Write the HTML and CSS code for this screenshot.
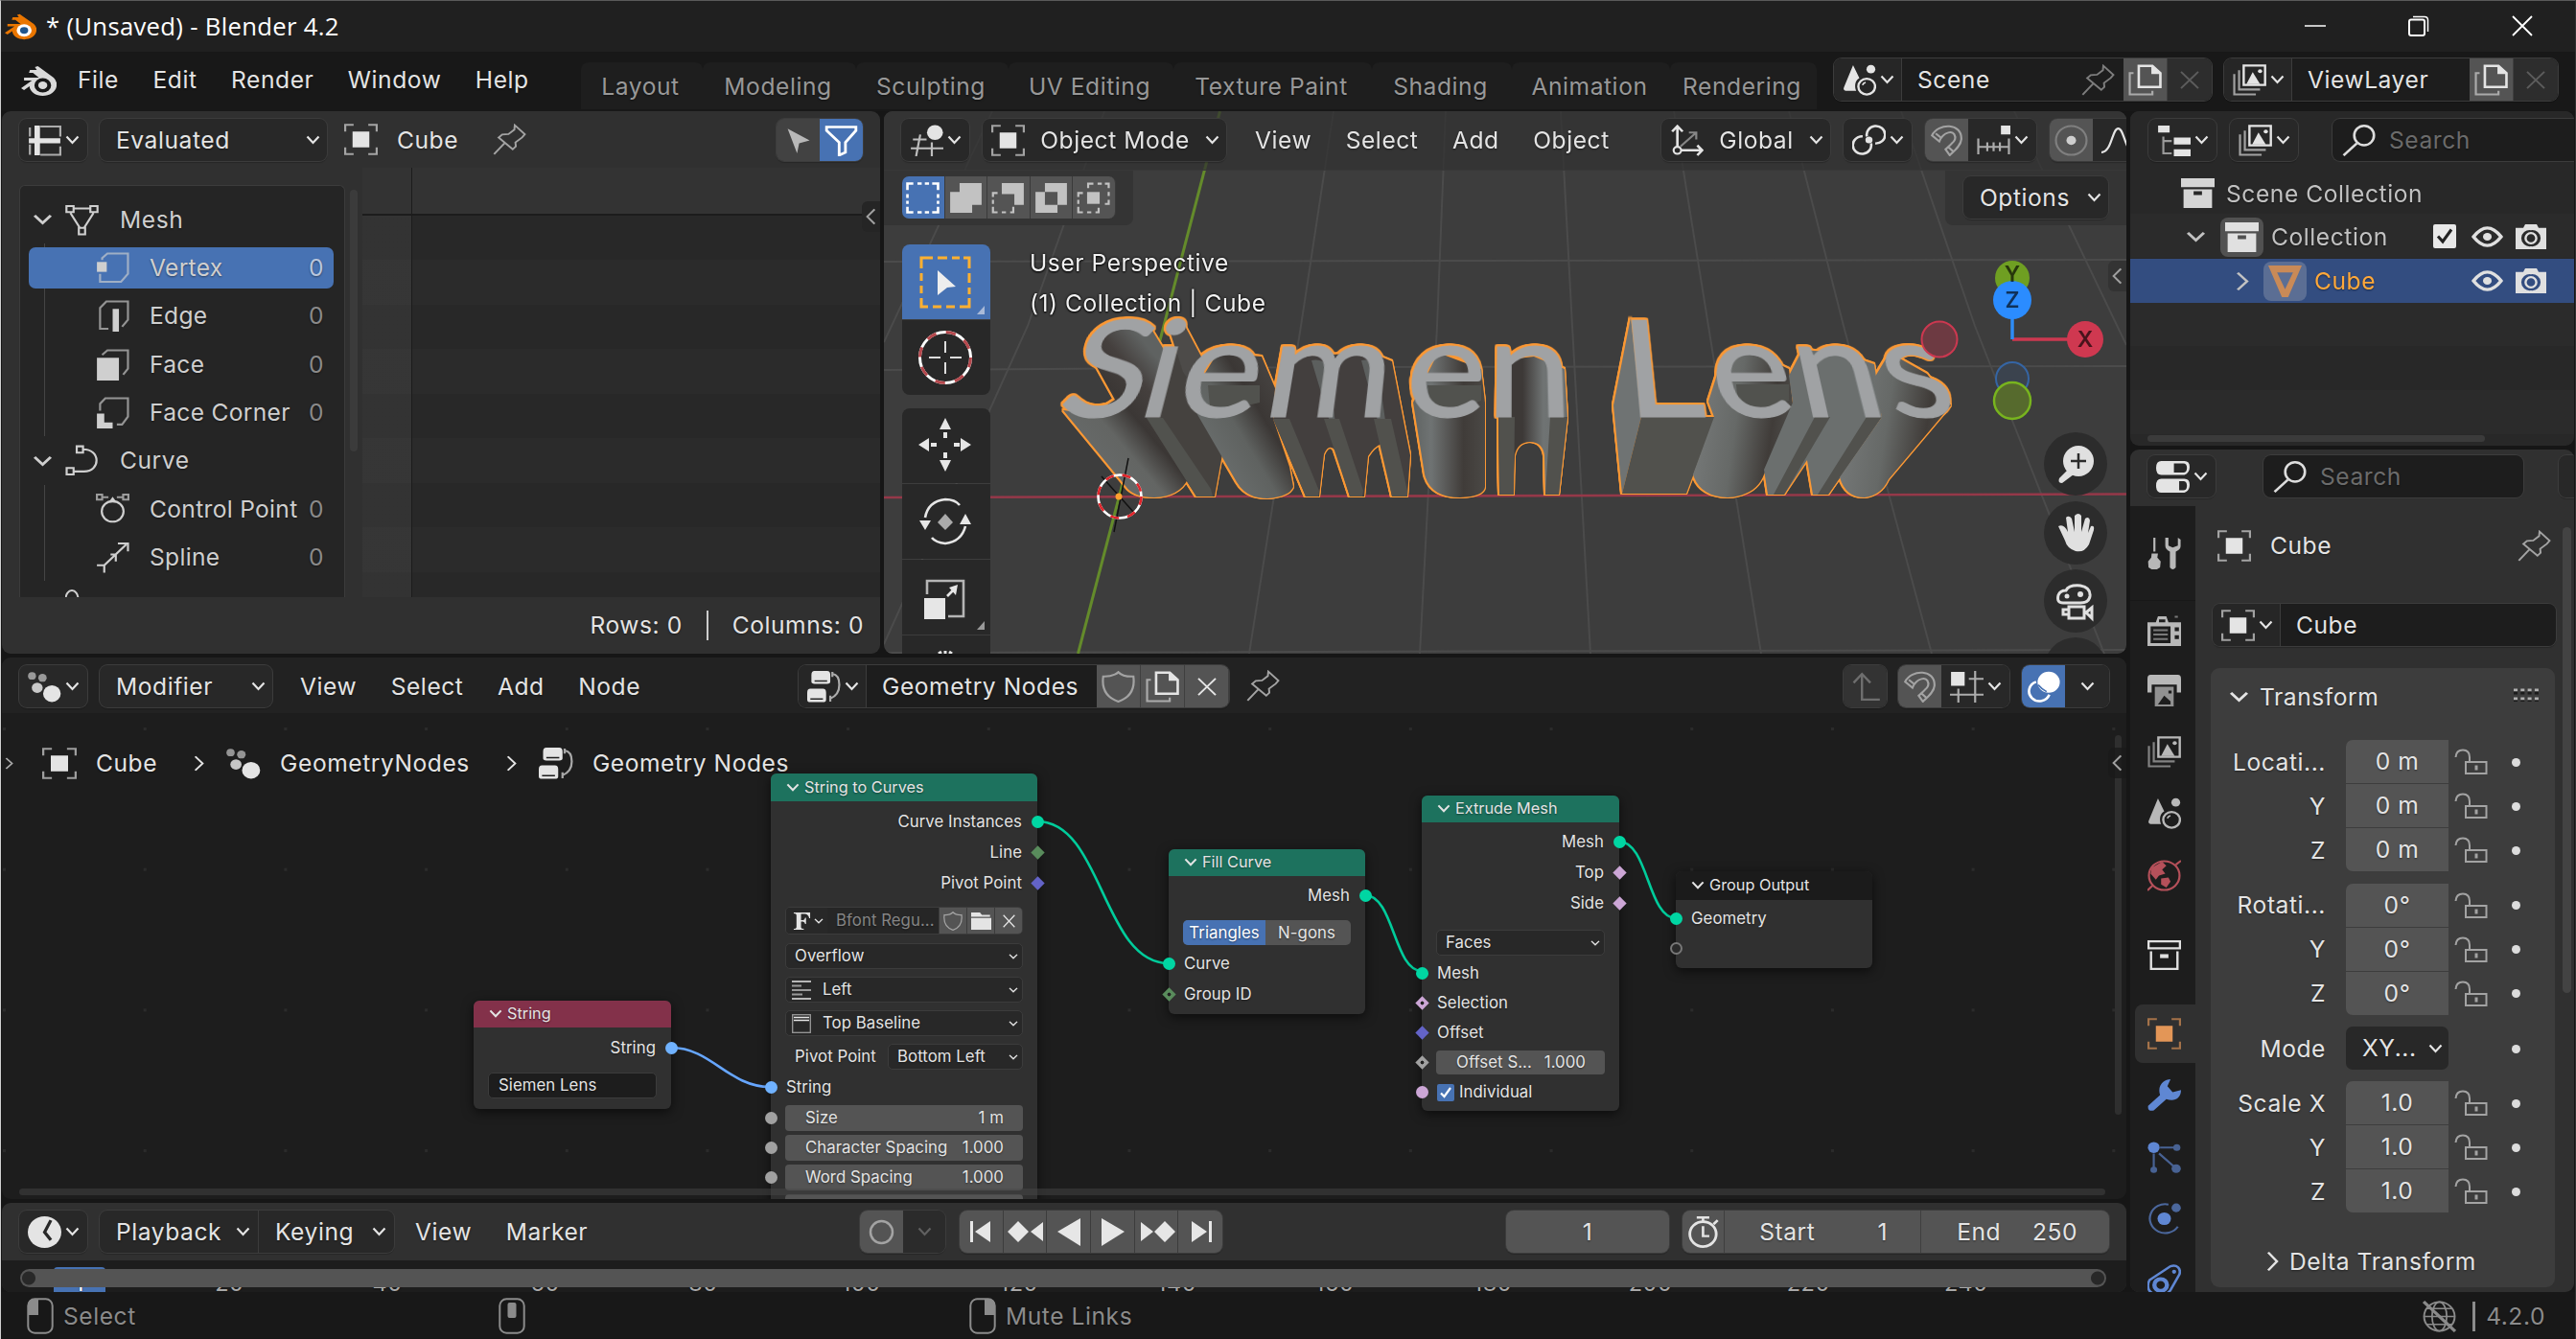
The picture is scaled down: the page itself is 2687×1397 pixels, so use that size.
FILE: index.html
```html
<!DOCTYPE html>
<html lang="en">
<head>
<meta charset="utf-8">
<title>* (Unsaved) - Blender 4.2</title>
<link rel="stylesheet" href="styles.css">
</head>
<body>
<svg class="defs" aria-hidden="true">
  <symbol id="chev" viewBox="0 0 15 10" preserveAspectRatio="none"><path d="M1.5 1.5 7.5 8 13.5 1.5" fill="none" stroke="currentColor" stroke-width="2.2"/></symbol>
  <symbol id="chevr" viewBox="0 0 10 20" preserveAspectRatio="none"><path d="M1.5 1.5 8.5 10 1.5 18.5" fill="none" stroke="currentColor" stroke-width="2"/></symbol>
  <symbol id="chevl" viewBox="0 0 10 20" preserveAspectRatio="none"><path d="M8.5 1.5 1.5 10 8.5 18.5" fill="none" stroke="currentColor" stroke-width="2"/></symbol>
  <symbol id="x" viewBox="0 0 20 20" preserveAspectRatio="none"><path d="M1 1 19 19M19 1 1 19" fill="none" stroke="currentColor" stroke-width="2"/></symbol>
  <symbol id="logo" viewBox="0 0 36 34" preserveAspectRatio="none"><path d="M17 2 33 14Q37 18 36 23C35 29 29 33 22 33S9 29 8.500 23L3 27 0 25 11 17H3V14H18L12 9H8L9 6H16L14 3Z" fill="currentColor"/><ellipse cx="22" cy="22" rx="8.500" ry="7.500" fill="var(--hole)"/><ellipse cx="22" cy="22" rx="4.600" ry="4" fill="var(--eye)"/></symbol>
  <symbol id="sheet" viewBox="0 0 16 16" preserveAspectRatio="none"><path d="M6 1H15.500V6M15.500 11V15.300H6M1 6V1.500M1 10V15.300" fill="none" stroke="currentColor" opacity=".7"/><path d="M4.500.5V15.500M.5 8.200H15.500" stroke="currentColor" stroke-width="2.600"/></symbol>
  <symbol id="obj" viewBox="0 0 16 16" preserveAspectRatio="none"><path d="M4 4H12V12H4Z" fill="currentColor"/><path d="M.5 4V.6H4.500M11.500.6H15.500V4M15.500 12V15.400H11.500M4.500 15.400H.5V12" fill="none" stroke="currentColor" opacity=".65"/></symbol>
  <symbol id="pin" viewBox="0 0 16 16" preserveAspectRatio="none"><path d="M10.500.8 15.300 5.400 14 7 10.800 9.500 11 11.500 9.500 13 2.800 7 4.500 5.500 7.500 5.300 10.300 3ZM5.500 10 .6 15.500" fill="none" stroke="currentColor" stroke-width=".9"/></symbol>
  <symbol id="arrow" viewBox="0 0 16 16" preserveAspectRatio="none"><path d="M3 2 13.500 8 8.500 9.500 7.500 14.500Z" fill="currentColor"/></symbol>
  <symbol id="filter" viewBox="0 0 16 16" preserveAspectRatio="none"><path d="M1 1.200H15V3L10 9V14L7 15.500V9L1 3Z" fill="none" stroke="currentColor" stroke-width="1.300"/></symbol>
  <symbol id="mesh" viewBox="0 0 16 16" preserveAspectRatio="none"><path d="M.6 1H4V4H.6ZM12 1H15.400V4H12ZM6.500 12H9.500V15.300H6.500ZM4 2.200H12M2.500 4.500 7 12M13.500 4.500 9 12" fill="none" stroke="currentColor"/></symbol>
  <symbol id="vert" viewBox="0 0 16 16" preserveAspectRatio="none"><path d="M3 4V3L5.500 .7H15.300V11L12 15H2V11" fill="none" stroke="currentColor" opacity=".65"/><path d="M.5 5H5.200V10H.5Z" fill="currentColor"/></symbol>
  <symbol id="edge" viewBox="0 0 16 16" preserveAspectRatio="none"><path d="M6 14.500H2V4L5 .7H15.300V10L12.500 13.500" fill="none" stroke="currentColor" opacity=".65"/><path d="M8 4.500H11V16H8Z" fill="currentColor"/></symbol>
  <symbol id="face" viewBox="0 0 16 16" preserveAspectRatio="none"><path d="M3 3 5.500 .7H15.300V10L13 13" fill="none" stroke="currentColor" opacity=".65"/><path d="M.5 4.500H11V16H.5Z" fill="currentColor"/></symbol>
  <symbol id="corner" viewBox="0 0 16 16" preserveAspectRatio="none"><path d="M2 7V3.500L4.500 .7H15.300V10L12.500 14H10" fill="none" stroke="currentColor" opacity=".65"/><path d="M.5 8.500H4V13H8V16H.5Z" fill="currentColor"/></symbol>
  <symbol id="curve" viewBox="0 0 16 16" preserveAspectRatio="none"><path d="M5.500 .8H8.500V4H5.500ZM.7 11.800H4V15H.7ZM8.500 2.300C17 2.300 17 13.500 9 13.500H4" fill="none" stroke="currentColor"/></symbol>
  <symbol id="cpoint" viewBox="0 0 16 16" preserveAspectRatio="none"><ellipse cx="8" cy="9.500" rx="5.200" ry="5.200" fill="none" stroke="currentColor"/><path d="M.5 1H3V3.500H.5ZM13 1H15.500V3.500H13ZM3 2.300H6M10 2.300H13" fill="none" stroke="currentColor" opacity=".7"/><path d="M8 2 10 5H6Z" fill="currentColor"/></symbol>
  <symbol id="spline" viewBox="0 0 16 16" preserveAspectRatio="none"><path d="M4 12 14.500 1.500M10.500 1H15.300V5M.5 12H4V15.800M7 6.500H9.500V10" fill="none" stroke="currentColor"/></symbol>
  <symbol id="view3d" viewBox="0 0 16 16" preserveAspectRatio="none"><ellipse cx="12" cy="4" rx="3.800" ry="3.800" fill="currentColor"/><path d="M1.500 7.500H8M.5 12H16M5 5 3 16M10.500 9V16" fill="none" stroke="currentColor" opacity=".8"/></symbol>
  <symbol id="orient" viewBox="0 0 16 16" preserveAspectRatio="none"><path d="M3.500 11V1M1 3.500 3.500.8 6 3.500M5.500 13H15M13 10.500 15.300 13 13 15.500" fill="none" stroke="currentColor" stroke-width="1.200"/><path d="M5 11 12 4.500M9 4H12.500V7.500" fill="none" stroke="currentColor" opacity=".5"/><circle cx="3.500" cy="13" r="1.800" fill="none" stroke="currentColor"/></symbol>
  <symbol id="pivot" viewBox="0 0 16 16" preserveAspectRatio="none"><path d="M7 6A4.400 4.400 0 1 1 11 9.500M9 9.500A4.400 4.400 0 1 1 5 6" fill="none" stroke="currentColor" stroke-width="1.200"/><circle cx="8" cy="7.800" r="1.700" fill="currentColor"/></symbol>
  <symbol id="magnet" viewBox="0 0 16 16" preserveAspectRatio="none"><path d="M1 5.500C4 -1 15.500-1 15 7.500 14.800 10.500 12 13 9.500 15.500L7.500 12.500C11 9 12.500 8 12 6 11.500 2.500 6.500 3.500 4.500 8.500ZM2.800 4.500 5.800 7M8.500 11 11 13.500" fill="none" stroke="currentColor"/></symbol>
  <symbol id="incr" viewBox="0 0 16 16" preserveAspectRatio="none"><path d="M11.500.5H16V5H11.500Z" fill="currentColor"/><path d="M.7 7V15M5 9V13.500M8 9V13.500M11 9V13.500M15.300 7V15M.7 11.300H15.300" fill="none" stroke="currentColor" opacity=".7"/></symbol>
  <symbol id="prop" viewBox="0 0 16 16" preserveAspectRatio="none"><circle cx="8" cy="8" r="7.300" fill="none" stroke="currentColor" opacity=".3"/><circle cx="8" cy="8" r="2.300" fill="currentColor" opacity=".85"/></symbol>
  <symbol id="fall" viewBox="0 0 16 16" preserveAspectRatio="none"><path d="M0 14C5 14 5 2 8 2S11 14 16 14" fill="none" stroke="currentColor"/></symbol>
  <symbol id="s1" viewBox="0 0 16 16" preserveAspectRatio="none"><path d="M.7 4V.7H3.500M5.500.7H7.500M9 .7H11M12.500.7H15.300V4M15.300 6V8M15.300 9.500V11M15.300 12.500V15.300H12.500M11 15.300H9M7.500 15.300H5.500M3.500 15.300H.7V12.500M.7 11V9.500M.7 8V6" fill="none" stroke="currentColor" stroke-width="1.200"/></symbol>
  <symbol id="s2" viewBox="0 0 16 16" preserveAspectRatio="none"><path d="M5 .5H15.500V11.500H11V15.500H.5V5H5Z" fill="currentColor"/></symbol>
  <symbol id="s3" viewBox="0 0 16 16" preserveAspectRatio="none"><path d="M5 .5H15.500V11.500H11V6H5Z" fill="currentColor"/><path d="M3 5.500H.8V7.500M.8 9V11M.8 12.500V15.300H3M5 15.300H7M9 15.300H10.500V12.500" fill="none" stroke="currentColor"/></symbol>
  <symbol id="s4" viewBox="0 0 16 16" preserveAspectRatio="none"><path fill-rule="evenodd" d="M5 .5H15.500V11.500H11V15.500H.5V5H5ZM5 5V11.500H11V5Z" fill="currentColor"/></symbol>
  <symbol id="s5" viewBox="0 0 16 16" preserveAspectRatio="none"><path d="M5 5H11V11H5Z" fill="currentColor"/><path d="M5.500 3V.8H8M10 .8H12M13.500.8H15.300V3M15.300 5V7M15.300 9V11H13.500M3 5.500H.8V7.500M.8 9V11M.8 12.500V15.300H3M5 15.300H7M9 15.300H10.500V13" fill="none" stroke="currentColor"/></symbol>
  <symbol id="scene" viewBox="0 0 16 16" preserveAspectRatio="none"><path d="M5 .5 8 7C6 8 5.500 11 6.500 13.500L1.500 13.500Q0 13 .7 11.500Z" fill="currentColor"/><circle cx="13.500" cy="2.500" r="2.100" fill="currentColor"/><circle cx="11.500" cy="11.300" r="4" fill="none" stroke="currentColor" stroke-width="1.100"/><path d="M9.500 10.500A2 2 0 0 1 11 9.200" fill="none" stroke="currentColor" stroke-width=".8"/></symbol>
  <symbol id="copy" viewBox="0 0 16 16" preserveAspectRatio="none"><path d="M5 .8H11.500L15.300 4.500V11.500H5Z" fill="none" stroke="currentColor" stroke-width="1.200"/><path d="M11 .5 15.500 5H11Z" fill="currentColor"/><path d="M2.500 4.500H.7V15.300H11.500V13.500" fill="none" stroke="currentColor" opacity=".6"/></symbol>
  <symbol id="layers" viewBox="0 0 16 16" preserveAspectRatio="none"><path d="M5.200 .7H15.400V10.500H5.200Z" fill="none" stroke="currentColor" stroke-width="1.100"/><path d="M6.500 10 9.500 4 13 10Z" fill="currentColor"/><circle cx="13" cy="3.500" r="1" fill="currentColor"/><path d="M3 3V12.800H13M.7 5V15.300H11" fill="none" stroke="currentColor" opacity=".65"/></symbol>
  <symbol id="outl" viewBox="0 0 16 16" preserveAspectRatio="none"><path d="M.5.500H6V4H.5ZM8 6.500H16V10H8ZM8 12.500H16V16H8Z" fill="currentColor"/><path d="M3 6V14.500H7M3 8.300H7" fill="none" stroke="currentColor" opacity=".6"/></symbol>
  <symbol id="search" viewBox="0 0 16 16" preserveAspectRatio="none"><ellipse cx="10.500" cy="5.500" rx="4.700" ry="4.900" fill="none" stroke="currentColor" stroke-width="1.200"/><path d="M7 9.500 .7 15.600" stroke="currentColor" stroke-width="1.200"/></symbol>
  <symbol id="box" viewBox="0 0 16 16" preserveAspectRatio="none"><path fill-rule="evenodd" d="M0 .5H16V5H0ZM1.200 6H14.800V15.500H1.200ZM6 7V9H10V7Z" fill="currentColor"/></symbol>
  <symbol id="boxo" viewBox="0 0 16 16" preserveAspectRatio="none"><path d="M.5 1H15.500V4.500H.5ZM1.700 6V15H14.300V6" fill="none" stroke="currentColor" stroke-width="1.100"/><path d="M6 7.500H10V9.500H6Z" fill="currentColor"/></symbol>
  <symbol id="eye" viewBox="0 0 16 12" preserveAspectRatio="none"><path d="M1 6Q4.500 1 8 1T15 6Q11.500 11 8 11T1 6Z" fill="none" stroke="currentColor" stroke-width="1.700"/><circle cx="8" cy="6" r="2.200" fill="currentColor"/></symbol>
  <symbol id="cam" viewBox="0 0 16 14" preserveAspectRatio="none"><path fill-rule="evenodd" d="M0 2H4L5 0H11L12 2H16V14H0ZM8 3.300A4.400 4.600 0 1 0 8 12.400A4.400 4.600 0 1 0 8 3.300Z" fill="currentColor"/><ellipse cx="8" cy="7.800" rx="2.800" ry="2.900" fill="none" stroke="currentColor" stroke-width="1.200"/></symbol>
  <symbol id="tri" viewBox="0 0 16 16" preserveAspectRatio="none"><path fill-rule="evenodd" d="M0 0H16L9.500 16H6.500ZM4.200 3.500 8 12 11.800 3.500Z" fill="currentColor"/></symbol>
  <symbol id="props" viewBox="0 0 16 16" preserveAspectRatio="none"><path fill-rule="evenodd" d="M2.500 0H13.500Q16 0 16 3T13.500 7H2.500Q0 7 0 3.500T2.500 0ZM8.500 1.200V5.800H13Q14.700 5.800 14.700 3.500T13 1.200ZM2.500 9H13.500Q16 9 16 12T13.500 16H2.500Q0 16 0 12.500T2.500 9ZM11 10.200V14.800H13Q14.700 14.800 14.700 12.500T13 10.200Z" fill="currentColor"/></symbol>
  <symbol id="tools" viewBox="0 0 16 16" preserveAspectRatio="none"><path d="M3.300 0V7" stroke="currentColor"/><path d="M2 8H5L4.700 10 6.300 12 6 15 4.500 16H2L.5 15 .3 12 1.800 10ZM8.500 0 8.500 4Q8.500 6 10.700 7V15Q12 17 13.500 15V7Q16 6 15.800 4V1L14.500 0V4L12 5 10 4V0Z" fill="currentColor"/></symbol>
  <symbol id="render" viewBox="0 0 16 16" preserveAspectRatio="none"><path fill-rule="evenodd" d="M0 4H4L5 1H9L10 4H16V16H0ZM1.500 6V14.500H11V6ZM13 6.500V8.500H15V6.500ZM13 10.500V12.500H15V10.500ZM5.500 2.500V4H8.500V2.500Z" fill="currentColor"/><path d="M13 1.200H14.500M2.800 8H9.700M2.800 10.200H9.700M2.800 12.500H9.700" stroke="currentColor" opacity=".6"/></symbol>
  <symbol id="print" viewBox="0 0 16 16" preserveAspectRatio="none"><path d="M1.500 0H14.500Q16 0 16 2V9H14V5H2V9H0V2Q0 0 1.500 0Z" fill="currentColor"/><path fill-rule="evenodd" d="M3.500 6H12.500V16H3.500ZM5 15 8 10.500 11 13.500V15ZM10 8V9.500H11.500V8Z" fill="currentColor" opacity=".75"/></symbol>
  <symbol id="world" viewBox="0 0 16 16" preserveAspectRatio="none"><circle cx="8" cy="8" r="7.300" fill="none" stroke="currentColor"/><path d="M2 4 7 1 9 3 7 5 8.500 7 5.500 8 4 10 1.500 7ZM6.500 9.500 10 9 11 11 9 14 6.500 12.500Z" fill="currentColor"/><path d="M0 15.500 2.500 13M13.500 2.500 16 .5" stroke="currentColor"/></symbol>
  <symbol id="wrench" viewBox="0 0 16 16" preserveAspectRatio="none"><path d="M11 0 9.500 3.500 12 6.500 16 5.500C16 10 12.500 11.500 9 10L3 15.800Q0 16.500 .3 13.500L6 8C4.500 3 8 0 11 0Z" fill="currentColor"/></symbol>
  <symbol id="part" viewBox="0 0 16 16" preserveAspectRatio="none"><circle cx="3" cy="3" r="2.800" fill="currentColor"/><g opacity=".65"><path d="M3 6V14M6 3H14M5.500 6 13 13" stroke="currentColor"/><circle cx="3" cy="14.300" r="1.600" fill="currentColor"/><circle cx="14" cy="3" r="1.700" fill="currentColor"/><circle cx="13.700" cy="13.700" r="2.200" fill="currentColor"/></g></symbol>
  <symbol id="phys" viewBox="0 0 16 16" preserveAspectRatio="none"><circle cx="8" cy="8" r="3.200" fill="currentColor"/><g opacity=".7"><circle cx="13.700" cy="2.500" r="2.200" fill="currentColor"/><path d="M10 .8A7.300 7.300 0 1 0 14.500 12" fill="none" stroke="currentColor"/></g></symbol>
  <symbol id="constr" viewBox="0 0 16 16" preserveAspectRatio="none"><path d="M1 8 11 1C14 0 16 2 15.300 5L11 13C9 16.500 3 16 1 13.500Q-.5 11 1 8Z" fill="none" stroke="currentColor" stroke-width="1.200"/><circle cx="6.300" cy="10.500" r="3" fill="none" stroke="currentColor" stroke-width="2"/><circle cx="12.700" cy="3.800" r="1" fill="currentColor"/></symbol>
  <symbol id="lock" viewBox="0 0 35 28" preserveAspectRatio="none"><path d="M1.500 9Q2 1.500 9 1.500T16 9V13M12 14H33.500V26H12Z" fill="none" stroke="currentColor" stroke-width="2"/><path d="M21.500 17.500H24.500V22.500H21.500Z" fill="currentColor"/></symbol>
  <symbol id="gn" viewBox="0 0 16 16" preserveAspectRatio="none"><circle cx="2" cy="2.500" r="1.900" fill="currentColor" opacity=".6"/><circle cx="7" cy="3.500" r="2" fill="currentColor" opacity=".6"/><circle cx="4.500" cy="8.500" r="2.600" fill="currentColor" opacity=".85"/><circle cx="11.500" cy="11.500" r="4.200" fill="currentColor"/></symbol>
  <symbol id="tree" viewBox="0 0 16 16" preserveAspectRatio="none"><path fill-rule="evenodd" d="M3.500 0H9.500Q11 0 11 2V5.500Q11 6.500 9.500 6.500H3.500Q2 6.500 2 5.500V2Q2 0 3.500 0ZM3.500 4.700V5.500H9.500V4.700ZM1.500 9H7.500Q9 9 9 11V14.500Q9 15.800 7.500 15.800H1.500Q0 15.800 0 14.500V11Q0 9 1.500 9ZM1.500 13.800V14.600H7.500V13.800Z" fill="currentColor"/><path d="M12 1.500Q15.300 2 15.300 7T11 14M12 .5V3M11 12.500V15.500" fill="none" stroke="currentColor" opacity=".7"/></symbol>
  <symbol id="shield" viewBox="0 0 16 16" preserveAspectRatio="none"><path d="M8 .6Q10 3 15.200 2.800C16 9 13.500 13.500 8 15.500 2.500 13.500 0 9 .8 2.800 6 3 8 .6 8 .6Z" fill="none" stroke="currentColor"/></symbol>
  <symbol id="up" viewBox="0 0 16 16" preserveAspectRatio="none"><path d="M6.500 2V14.500H15M2.500 6 6.500 1.500 10.500 6" fill="none" stroke="currentColor" stroke-width="1.100"/></symbol>
  <symbol id="grid" viewBox="0 0 16 16" preserveAspectRatio="none"><path d="M.5.500H7V7.500H.5Z" fill="currentColor"/><path d="M9 4H16M0 12H16M4 9V16M12 0V16" fill="none" stroke="currentColor" opacity=".7"/></symbol>
  <symbol id="overlay" viewBox="0 0 16 16" preserveAspectRatio="none"><circle cx="10.500" cy="5.700" r="5.300" fill="currentColor"/><path d="M4.500 5.500A5 5 0 1 0 10.800 12" fill="none" stroke="currentColor" stroke-width="1.200"/><path d="M5.500 7Q7 9 9.500 10.500" stroke="#4772b3" fill="none" stroke-width=".8"/></symbol>
  <symbol id="clock" viewBox="0 0 16 16" preserveAspectRatio="none"><circle cx="8" cy="8" r="8" fill="currentColor"/><path d="M11 2 8 8 11 12" fill="none" stroke="#282828" stroke-width="1.500"/></symbol>
  <symbol id="watch" viewBox="0 0 16 16" preserveAspectRatio="none"><circle cx="7.500" cy="9" r="6.300" fill="none" stroke="currentColor" stroke-width="1.300"/><path d="M7.500 5V10H10.500M7.500 0V3M4.500.6H10.500M12.500 4 14.500 2" fill="none" stroke="currentColor" stroke-width="1.200"/></symbol>
  <symbol id="font" viewBox="0 0 20 20" preserveAspectRatio="none"><path d="M1 1H19V7H18Q17 2.500 13 2.500H9V9H11Q13 9 13.500 6.500H14.500V13H13.500Q13 10.500 11 10.500H9V16.500Q9 18 12 18V19H1V18Q4 18 4 16V4Q4 2 1 2Z" fill="currentColor"/></symbol>
  <symbol id="folder" viewBox="0 0 16 14" preserveAspectRatio="none"><path d="M0 0H7L8.500 2H15V3.500H0ZM0 4.500H16V14H0Z" fill="currentColor"/></symbol>
  <symbol id="mouse" viewBox="0 0 28 38" preserveAspectRatio="none"><rect x="1.300" y="1.300" width="25.400" height="35.400" rx="7" fill="none" stroke="currentColor" stroke-width="2"/></symbol>
  <symbol id="globe" viewBox="0 0 16 16" preserveAspectRatio="none"><circle cx="8" cy="8" r="7.300" fill="none" stroke="currentColor" stroke-width=".9"/><ellipse cx="8" cy="8" rx="3.500" ry="7.300" fill="none" stroke="currentColor" stroke-width=".8"/><path d="M1 8H15M2 4H14M2 12H14" stroke="currentColor" stroke-width=".8"/><path d="M.5.500 15.500 15.500" stroke="currentColor" stroke-width="1.500"/></symbol>
</svg>

<div class="app">
  <header class="titlebar">
    <svg class="applogo"><use href="#logo"/></svg>
    <span class="wtitle">* (Unsaved) - Blender 4.2</span>
    <div class="winctl">
      <svg viewBox="0 0 22 22"><path d="M0 11H22" stroke="#fff" stroke-width="1.500"/></svg>
      <svg viewBox="0 0 22 22"><path d="M5 1.500H17Q20.500 1.500 20.500 5V17" fill="none" stroke="#fff" stroke-width="1.500"/><rect x="1" y="4.500" width="16" height="16.500" rx="2" fill="none" stroke="#fff" stroke-width="2"/></svg>
      <svg viewBox="0 0 22 22"><path d="M1 1 21 21M21 1 1 21" stroke="#fff" stroke-width="1.800"/></svg>
    </div>
  </header>

  <nav class="topbar">
    <svg class="menulogo"><use href="#logo"/></svg>
    <div class="menus"><span>File</span><span>Edit</span><span>Render</span><span>Window</span><span>Help</span></div>
    <div class="tabs">
      <span class="t1">Layout</span><span class="t2">Modeling</span><span class="t3">Sculpting</span><span class="t4">UV Editing</span><span class="t5">Texture Paint</span><span class="t6">Shading</span><span class="t7">Animation</span><span class="t8">Rendering</span>
    </div>
    <div class="idsel scene">
      <span class="ed"><svg class="i"><use href="#scene"/></svg><svg class="c"><use href="#chev"/></svg></span>
      <span class="field">Scene<svg class="i dim pinr"><use href="#pin"/></svg></span>
      <span class="cell on"><svg class="i"><use href="#copy"/></svg></span>
      <span class="cell off"><svg class="xx"><use href="#x"/></svg></span>
    </div>
    <div class="idsel vlayer">
      <span class="ed"><svg class="i"><use href="#layers"/></svg><svg class="c"><use href="#chev"/></svg></span>
      <span class="field">ViewLayer</span>
      <span class="cell on"><svg class="i"><use href="#copy"/></svg></span>
      <span class="cell off"><svg class="xx"><use href="#x"/></svg></span>
    </div>
  </nav>

  <main class="work">
    <div class="left">
      <div class="upper">
        <section class="area sheet">
          <div class="hdr">
            <span class="btn ed"><svg class="i"><use href="#sheet"/></svg><svg class="c"><use href="#chev"/></svg></span>
            <span class="btn dd evald">Evaluated<svg class="c"><use href="#chev"/></svg></span>
            <svg class="i objic"><use href="#obj"/></svg><span class="objname">Cube</span><svg class="i dim2 objpin"><use href="#pin"/></svg>
            <span class="seg push"><span class="cell g"><svg class="i"><use href="#arrow"/></svg></span><span class="cell blue"><svg class="i"><use href="#filter"/></svg></span></span>
          </div>
          <div class="sheetbody">
            <div class="tree">
              <div class="tr top"><svg class="cv"><use href="#chev"/></svg><svg class="i"><use href="#mesh"/></svg><span>Mesh</span></div>
              <div class="kids">
                <div class="tr sel"><svg class="i"><use href="#vert"/></svg><span>Vertex</span><b>0</b></div>
                <div class="tr"><svg class="i"><use href="#edge"/></svg><span>Edge</span><b>0</b></div>
                <div class="tr"><svg class="i"><use href="#face"/></svg><span>Face</span><b>0</b></div>
                <div class="tr"><svg class="i"><use href="#corner"/></svg><span>Face Corner</span><b>0</b></div>
              </div>
              <div class="tr top"><svg class="cv"><use href="#chev"/></svg><svg class="i"><use href="#curve"/></svg><span>Curve</span></div>
              <div class="kids">
                <div class="tr"><svg class="i"><use href="#cpoint"/></svg><span>Control Point</span><b>0</b></div>
                <div class="tr"><svg class="i"><use href="#spline"/></svg><span>Spline</span><b>0</b></div>
              </div>
              <div class="tr top more"><svg class="i" viewBox="0 0 35 33"><ellipse cx="7" cy="10" rx="6.500" ry="9" fill="none" stroke="currentColor" stroke-width="2"/></svg></div>
            </div>
            <div class="treescroll"></div>
            <div class="cells"><div class="chead"></div><div class="rows"></div></div>
          </div>
          <div class="foot"><span>Rows: 0</span><i></i><span>Columns: 0</span></div>
          <span class="fold fs"><svg><use href="#chevl"/></svg></span>
        </section>

        <section class="area view">
          <svg class="scenebg" viewBox="922 116 1296 566">
            <g stroke="#4b4b4b" stroke-width="2" fill="none">
              <path d="M922 273 2218 271M922 386 1400 383 2218 382M922 681 2218 678"/>
              <path d="M1035 116 922 357M1152 116 1072 340 922 672M1391 116 1357 340 1303 682M1508 116 1499 340 1481 682M1628 116 1640 340 1659 682M1746 116 1782 340 1837 682M1866 116 1923 340 2015 682M1983 116 2060 340 2195 682M2101 116 2218 360"/>
            </g>
            <path d="M922 519 2218 515.500" stroke="#953849" stroke-width="2.600"/>
            <path d="M1272.500 116 1124.500 682" stroke="#648b2b" stroke-width="3"/>
          </svg>
          <div class="model">
            <svg class="sides" viewBox="922 116 1296 566">
              <defs>
                <linearGradient id="ga" gradientUnits="userSpaceOnUse" x1="1138" y1="470" x2="1226" y2="396"><stop offset="0" stop-color="#666968"/><stop offset=".25" stop-color="#636563"/><stop offset=".5" stop-color="#3b3735"/><stop offset=".75" stop-color="#45403e"/><stop offset="1" stop-color="#5f6261"/></linearGradient>
                <linearGradient id="ge" gradientUnits="userSpaceOnUse" x1="1262" y1="465" x2="1345" y2="415"><stop offset="0" stop-color="#686c6b"/><stop offset=".35" stop-color="#5f6260"/><stop offset=".65" stop-color="#3b3735"/><stop offset="1" stop-color="#474442"/></linearGradient>
                <linearGradient id="gb" x1="0" y1="0" x2="1" y2="0"><stop offset="0" stop-color="#606463"/><stop offset=".25" stop-color="#6f7373"/><stop offset=".7" stop-color="#403c39"/><stop offset="1" stop-color="#4a4845"/></linearGradient>
                <linearGradient id="gn1" x1="0" y1="0" x2="1" y2="0"><stop offset="0" stop-color="#3d3937"/><stop offset=".35" stop-color="#3d3937"/><stop offset=".65" stop-color="#6f7373"/><stop offset="1" stop-color="#6b6f6f"/></linearGradient>
                <linearGradient id="gc" x1="0" y1="0" x2="1" y2=".2"><stop offset="0" stop-color="#7a7d7d"/><stop offset=".5" stop-color="#666967"/><stop offset=".85" stop-color="#403c39"/><stop offset="1" stop-color="#4b4946"/></linearGradient>
              </defs>
              <path d="M1109 428 1174 507Q1182 519 1204 519 1230 518 1239 500L1250 460 1216 368 1199 340 1170 335 1145 345 1138 372 1163 417 1140 432Z" fill="url(#ga)"/>
              <path d="M1196 436 1248 518H1267L1275 474 1262 400 1228 365Z" fill="#45423f"/>
              <path d="M1196 436H1213L1263 510 1265 518H1248Z" fill="#51524e"/>
              <path d="M1221 348 1236 340 1254 374 1242 400 1234 388Z" fill="#4d4b49"/>
              <path d="M1240 417 1290 503Q1300 520 1322 520 1345 518 1349 508L1345 487 1328 437 1330 405 1316 372 1270 368Z" fill="url(#ge)"/>
              <path d="M1260 402H1314V420L1296 424H1262Z" fill="#51524e"/>
              <path d="M1328 437 1362 518H1376L1381 474Q1386 462 1393 470L1408 518H1423L1427 476Q1433 466 1441 463L1452 518H1468L1471 475 1452 377 1430 368 1345 372Z" fill="#433f3e"/>
              <path d="M1368 376Q1380 374 1384 382L1396 460 1390 450ZM1420 376Q1432 374 1437 382L1448 460 1440 450Z" fill="#5c5f5e"/>
              <path d="M1328 437H1345L1376 512 1375 518H1362ZM1381 437H1397L1422 512 1421 518H1408ZM1433 437H1451L1468 512V518H1452Z" fill="#51514d"/>
              <path d="M1474 420 1486 495Q1492 519 1523 519 1548 518 1549 508L1549 420 1545 385 1500 368Z" fill="url(#gb)"/>
              <path d="M1489 402H1545V418L1530 424H1492Z" fill="#51524e"/>
              <path d="M1563 435 1564 516H1578L1580 475Q1583 461 1596 461 1609 461 1611 475L1612 516H1626L1635 435 1632 385 1600 372 1575 375Z" fill="url(#gn1)"/>
              <path d="M1563 435H1580L1579 516H1564ZM1617 435H1635L1626 516H1612Z" fill="#51514d"/>
              <path d="M1701 331 1683 423 1692 515 1712 435Z" fill="#6f7373"/>
              <path d="M1692 515H1759L1789 435H1712Z" fill="#51514d"/>
              <path d="M1797 372 1782 419 1788 435 1766 495Q1773 518 1802 519 1832 517 1840 495L1871 430 1866 385 1830 368Z" fill="url(#gc)"/>
              <path d="M1811 401H1866V418L1850 424H1813Z" fill="#51524e"/>
              <path d="M1880 365 1866 392 1870 420 1840 490 1844 516H1861L1885 480 1891 516H1907L1963 435 1955 380 1920 368Z" fill="#6b6f6e"/>
              <path d="M1893 435H1909L1861 516H1850ZM1947 435H1963L1907 516H1896Z" fill="#51514d"/>
              <path d="M1971 368 1954 396 1963 435 1919 498Q1925 519 1945 519 1962 517 1970 500L2035 423 2010 390Z" fill="url(#gc)"/>
            </svg>
            <svg class="faceplane" viewBox="0 0 1296 566"><text y="319" x="213 290 327 412 550 630 700 766 853 936 1024">Siemen Lens</text></svg>
          </div>
          <svg class="gizmo" viewBox="922 116 1296 566">
            <path d="M1149 497 1183 535M1177 478 1162 555" stroke="#111" stroke-width="1.500"/>
            <circle cx="1168" cy="518" r="22.500" fill="none" stroke="#fff" stroke-width="2.600"/>
            <circle cx="1168" cy="518" r="22.500" fill="none" stroke="#e0252b" stroke-width="2.600" stroke-dasharray="9 9"/>
            <circle cx="1167" cy="518" r="3.500" fill="#ffa02f"/>
            <path d="M2099 354H2160" stroke="#cc3850" stroke-width="3.500"/>
            <circle cx="2099" cy="290" r="18" fill="#6f9f22"/>
            <path d="M2099 320V354" stroke="#2e8cf6" stroke-width="3.500"/>
            <circle cx="2099" cy="313" r="20" fill="#2b8cff"/>
            <circle cx="2175" cy="354" r="19" fill="#cf3850"/>
            <circle cx="2023" cy="354" r="18.500" fill="#6d3a42" stroke="#cc3850" stroke-width="2"/>
            <circle cx="2099" cy="395" r="17" fill="#3b434e" stroke="#3565a4" stroke-width="2"/>
            <circle cx="2099" cy="418" r="19" fill="#566a2d" stroke="#78b41e" stroke-width="2.500"/>
            <g class="ax"><text x="2099" y="294">Y</text><text x="2099" y="321">Z</text><text x="2175" y="362">X</text></g>
            <g fill="#2c2c2c"><circle cx="2165" cy="484" r="33"/><circle cx="2165" cy="556" r="33"/><circle cx="2165" cy="627" r="33"/><circle cx="2165" cy="698" r="33"/></g>
            <g fill="#e0e0e0"><circle cx="2168" cy="481" r="16"/><path d="M2158 489 2163 495 2151 504Q2146 504 2148 499Z"/>
            <path d="M2147 549Q2153 546 2157 555L2155 540Q2158 537 2161 541L2164 555V538Q2168 534 2171 538V555L2175 541Q2179 538 2180 543L2178 556 2181 549Q2185 548 2184 553L2179 568Q2174 577 2165 575 2156 572 2154 564Z"/></g>
            <path d="M2168 473V489M2160 481H2176" stroke="#2c2c2c" stroke-width="2.500"/>
            <g fill="none" stroke="#e0e0e0" stroke-width="3"><path d="M2152 629Q2145 629 2147 621 2149 616 2155 616 2158 610 2170 611 2181 613 2180 622 2179 629 2170 629ZM2158 633H2174V645H2158ZM2158 636H2152V641H2158M2176 639 2182 634V645Z"/></g>
            <circle cx="2170" cy="620" r="3" fill="#e0e0e0"/><circle cx="2156" cy="622" r="2.500" fill="#e0e0e0"/>
          </svg>
          <div class="hdr vh">
            <span class="btn ed"><svg class="i"><use href="#view3d"/></svg><svg class="c"><use href="#chev"/></svg></span>
            <span class="btn dd mode"><svg class="i"><use href="#obj"/></svg>Object Mode<svg class="c"><use href="#chev"/></svg></span>
            <div class="menus"><span>View</span><span>Select</span><span>Add</span><span>Object</span></div>
            <span class="btn dd global"><svg class="i"><use href="#orient"/></svg>Global<svg class="c"><use href="#chev"/></svg></span>
            <span class="btn ed g14"><svg class="i"><use href="#pivot"/></svg><svg class="c"><use href="#chev"/></svg></span>
            <span class="seg g14"><span class="cell g2"><svg class="i dim2"><use href="#magnet"/></svg></span><span class="ed dk"><svg class="i"><use href="#incr"/></svg><svg class="c"><use href="#chev"/></svg></span></span>
            <span class="seg g14"><span class="cell g2"><svg class="i"><use href="#prop"/></svg></span><span class="ed dk"><svg class="i"><use href="#fall"/></svg></span></span>
          </div>
          <div class="selmodes"><span class="cell blue"><svg class="i"><use href="#s1"/></svg></span><span class="cell"><svg class="i"><use href="#s2"/></svg></span><span class="cell"><svg class="i"><use href="#s3"/></svg></span><span class="cell"><svg class="i"><use href="#s4"/></svg></span><span class="cell"><svg class="i"><use href="#s5"/></svg></span></div>
          <div class="optwrap"><span class="btn dd">Options<svg class="c"><use href="#chev"/></svg></span></div>
          <div class="tools">
            <div class="tool act"><svg viewBox="0 0 92 78"><path d="M20 25V14H32M37 14H47M52 14H60M64 14H70V25M70 30V40M70 45V52M70 56V65H60M55 65H46M41 65H32M27 65H20V56M20 51V43M20 38V30" fill="none" stroke="#ffb031" stroke-width="3"/><path d="M37 27 56 44 47 45 37 53Z" fill="#eee"/><path d="M78 73H86V64Z" fill="#a9bad8"/></svg></div>
            <div class="tool tb"><svg viewBox="0 0 92 78"><circle cx="45" cy="39" r="26.500" fill="none" stroke="#fff" stroke-width="3"/><circle cx="45" cy="39" r="26.500" fill="none" stroke="#b5474c" stroke-width="3" stroke-dasharray="10.400 10.400"/><path d="M45 22V34M45 44V56M28 39H40M50 39H62" stroke="#ddd" stroke-width="2"/></svg></div>
            <div class="tool tt gap"><svg viewBox="0 0 92 78"><path d="M45 10 51 22H39ZM45 66 51 54H39ZM17 38 28 31V45ZM72 38 61 31V45Z" fill="#e6e6e6"/><path d="M45 25V31M45 46V52M30 38H36M54 38H60" stroke="#e6e6e6" stroke-width="4"/></svg></div>
            <div class="tool"><svg viewBox="0 0 92 78"><path d="M24 35Q27 18 45 16 55 16 60 22M66 44Q62 60 45 62 35 61 31 56" fill="none" stroke="#e6e6e6" stroke-width="2.600"/><path d="M45 31 53 40 45 48 37 40Z" fill="#aaa"/><path d="M18 38H30L24 48ZM60 42H72L66 31Z" fill="#e6e6e6"/></svg></div>
            <div class="tool"><svg viewBox="0 0 92 78"><path d="M26 36V22H64V59H48" fill="none" stroke="#b5b5b5" stroke-width="2.600"/><path d="M23 40H45V62H23Z" fill="#e6e6e6"/><path d="M47 38 55 30" stroke="#e6e6e6" stroke-width="2.600"/><path d="M49 29 58 26 56 37Z" fill="#e6e6e6"/><path d="M78 73H86V64Z" fill="#999"/></svg></div>
            <div class="tool"><svg viewBox="0 0 92 78"><path d="M38 19 41 17M45 19V16M52 19 49 17" stroke="#e6e6e6" stroke-width="3"/></svg></div>
          </div>
          <div class="persp"><p>User Perspective</p><p>(1) Collection | Cube</p></div>
          <span class="fold fv"><svg><use href="#chevl"/></svg></span>
        </section>
      </div>

      <section class="area nodes">
        <div class="hdr">
          <span class="btn ed"><svg class="i"><use href="#gn"/></svg><svg class="c"><use href="#chev"/></svg></span>
          <span class="btn dd modif">Modifier<svg class="c"><use href="#chev"/></svg></span>
          <div class="menus"><span>View</span><span>Select</span><span>Add</span><span>Node</span></div>
          <div class="idsel gnsel">
            <span class="ed"><svg class="i"><use href="#tree"/></svg><svg class="c"><use href="#chev"/></svg></span>
            <span class="field">Geometry Nodes</span>
            <span class="cell on"><svg class="i dim2"><use href="#shield"/></svg></span><span class="cell on"><svg class="i"><use href="#copy"/></svg></span><span class="cell on"><svg class="xx"><use href="#x"/></svg></span>
          </div>
          <svg class="i dim2 gnpin"><use href="#pin"/></svg>
          <span class="seg push r11"><span class="cell upb"><svg class="i"><use href="#up"/></svg></span></span>
          <span class="seg g12"><span class="cell g2"><svg class="i dim2"><use href="#magnet"/></svg></span><span class="ed dk"><svg class="i"><use href="#grid"/></svg><svg class="c"><use href="#chev"/></svg></span></span>
          <span class="seg g12 ov"><span class="cell blue"><svg class="i"><use href="#overlay"/></svg></span><span class="cell dk"><svg class="c"><use href="#chev"/></svg></span></span>
        </div>
        <div class="canvas">
          <div class="crumbs"><svg class="cr0"><use href="#chevr"/></svg><svg class="i"><use href="#obj"/></svg><span class="w1">Cube</span><svg class="cr"><use href="#chevr"/></svg><svg class="i"><use href="#gn"/></svg><span class="w2">GeometryNodes</span><svg class="cr"><use href="#chevr"/></svg><svg class="i"><use href="#tree"/></svg><span>Geometry Nodes</span></div>
          <svg class="links" viewBox="2 744 2216 507"><g fill="none" stroke-width="2.600"><path d="M700 1093C742 1093 760 1134 803 1134" stroke="#66a6ff"/><path d="M1082 857C1150 857 1150 1005 1219 1005M1424 934C1454 934 1454 1013 1483 1013M1689 878C1719 878 1719 958 1748 958" stroke="#00cc9b"/></g></svg>

          <div class="node nstring">
            <div class="nh red"><svg><use href="#chev"/></svg>String</div>
            <div class="nr out">String<i class="so str"></i></div>
            <div class="nf">Siemen Lens</div>
          </div>
          <div class="node nstc">
            <div class="nh grn"><svg><use href="#chev"/></svg>String to Curves</div>
            <div class="nr out">Curve Instances<i class="so geo"></i></div>
            <div class="nr out">Line<i class="di int"></i></div>
            <div class="nr out">Pivot Point<i class="di vec"></i></div>
            <div class="nfont"><span class="f0"><svg class="ff"><use href="#font"/></svg><svg class="nc"><use href="#chev"/></svg></span><span class="f1">Bfont Regu...</span><span class="f2"><svg class="dim2"><use href="#shield"/></svg></span><span class="f2"><svg class="fo"><use href="#folder"/></svg></span><span class="f2"><svg class="fx"><use href="#x"/></svg></span></div>
            <div class="nd">Overflow<svg class="nc"><use href="#chev"/></svg></div>
            <div class="nd ic"><svg class="ni" viewBox="0 0 20 20"><path d="M0 1H20M0 19H20" stroke="#e6e6e6" stroke-width="1.500"/><path d="M0 5.500H10M0 10H20M0 14.500H11" stroke="#999" stroke-width="2"/></svg>Left<svg class="nc"><use href="#chev"/></svg></div>
            <div class="nd ic"><svg class="ni" viewBox="0 0 20 20"><rect x=".7" y=".7" width="18.600" height="18.600" fill="none" stroke="#999" stroke-width="1.300"/><path d="M2 3.500H18M2 6.500H18" stroke="#e6e6e6" stroke-width="1.500"/></svg>Top Baseline<svg class="nc"><use href="#chev"/></svg></div>
            <div class="npiv"><span>Pivot Point</span><div class="nd">Bottom Left<svg class="nc"><use href="#chev"/></svg></div></div>
            <div class="nr in">String<i class="so str"></i></div>
            <div class="nv">Size<span>1 m</span><i class="so flt"></i></div>
            <div class="nv">Character Spacing<span>1.000</span><i class="so flt"></i></div>
            <div class="nv">Word Spacing<span>1.000</span><i class="so flt"></i></div>
            <div class="nv"></div>
          </div>
          <div class="node nfill">
            <div class="nh grn"><svg><use href="#chev"/></svg>Fill Curve</div>
            <div class="nr out">Mesh<i class="so geo"></i></div>
            <div class="ntog"><span class="blue">Triangles</span><span>N-gons</span></div>
            <div class="nr in">Curve<i class="so geo"></i></div>
            <div class="nr in">Group ID<i class="di int dot"></i></div>
          </div>
          <div class="node next">
            <div class="nh grn"><svg><use href="#chev"/></svg>Extrude Mesh</div>
            <div class="nr out">Mesh<i class="so geo"></i></div>
            <div class="nr out">Top<i class="di boo"></i></div>
            <div class="nr out">Side<i class="di boo"></i></div>
            <div class="nd">Faces<svg class="nc"><use href="#chev"/></svg></div>
            <div class="nr in">Mesh<i class="so geo"></i></div>
            <div class="nr in">Selection<i class="di boo dot"></i></div>
            <div class="nr in">Offset<i class="di vec"></i></div>
            <div class="nv">Offset S...<span>1.000</span><i class="di flt dot"></i></div>
            <div class="nr in chk"><svg class="cb" viewBox="0 0 18 18"><rect width="18" height="18" rx="2" fill="#4772b3"/><path d="M4 9.500 7.500 13 14 4" fill="none" stroke="#fff" stroke-width="2.200"/></svg>Individual<i class="so boo"></i></div>
          </div>
          <div class="node ngo">
            <div class="nh blk"><svg><use href="#chev"/></svg>Group Output</div>
            <div class="nr in">Geometry<i class="so geo"></i></div>
            <div class="nr in"><i class="so vir"></i></div>
          </div>
          <div class="hbar"></div><div class="vbar"></div>
          <span class="fold fn"><svg><use href="#chevl"/></svg></span>
        </div>
      </section>

      <section class="area time">
        <div class="hdr">
          <span class="btn ed"><svg class="i"><use href="#clock"/></svg><svg class="c"><use href="#chev"/></svg></span>
          <span class="btn dd pk"><span class="pb">Playback<svg class="c"><use href="#chev"/></svg></span><span class="ky">Keying<svg class="c"><use href="#chev"/></svg></span></span>
          <div class="menus"><span>View</span><span>Marker</span></div>
          <span class="seg rec"><span class="cell g2"><svg class="i dim2" viewBox="0 0 35 33"><circle cx="17.500" cy="16.500" r="11.500" fill="none" stroke="currentColor" stroke-width="2.500"/></svg></span><span class="cell dk2"><svg class="c"><use href="#chev"/></svg></span></span>
          <span class="seg play">
            <span><svg viewBox="0 0 46 44"><path d="M11 11H14V33H11ZM32 11V33L16 22Z"/></svg></span>
            <span><svg viewBox="0 0 46 44"><path d="M15 11 26 22 15 33 4 22ZM41 12V32L28 22Z"/></svg></span>
            <span><svg viewBox="0 0 46 44"><path d="M35 8V37L11 22Z"/></svg></span>
            <span><svg viewBox="0 0 46 44"><path d="M11 8V37L35 22Z"/></svg></span>
            <span><svg viewBox="0 0 46 44"><path d="M31 11 42 22 31 33 20 22ZM6 12V32L19 22Z"/></svg></span>
            <span><svg viewBox="0 0 46 44"><path d="M35 11H32V33H35ZM14 11V33L30 22Z"/></svg></span>
          </span>
          <span class="num cur">1</span>
          <span class="seg range"><span class="wt"><svg class="i"><use href="#watch"/></svg></span><span class="st">Start<em>1</em></span><span class="en">End<em>250</em></span></span>
        </div>
        <div class="ruler">
          <span>20</span><span>40</span><span>60</span><span>80</span><span>100</span><span>120</span><span>140</span><span>160</span><span>180</span><span>200</span><span>220</span><span>240</span>
          <div class="cf">1</div><div class="rbar"></div>
        </div>
      </section>
    </div>

    <div class="right">
      <section class="area outl">
        <div class="hdr">
          <span class="btn ed"><svg class="i"><use href="#outl"/></svg><svg class="c"><use href="#chev"/></svg></span>
          <span class="btn ed g14"><svg class="i"><use href="#layers"/></svg><svg class="c"><use href="#chev"/></svg></span>
          <span class="search"><svg class="i"><use href="#search"/></svg>Search</span>
        </div>
        <div class="or o1"><svg class="i"><use href="#box"/></svg><span>Scene Collection</span></div>
        <div class="or o2"><svg class="cv"><use href="#chev"/></svg><b class="ib"><svg class="i"><use href="#box"/></svg></b><span>Collection</span>
          <svg class="cb" viewBox="0 0 24 25"><rect width="24" height="25" rx="2" fill="#e8e8e8"/><path d="M5 12.500 10 18 19 5.500" fill="none" stroke="#222" stroke-width="3"/></svg><svg class="ey"><use href="#eye"/></svg><svg class="cm"><use href="#cam"/></svg></div>
        <div class="or o3"><svg class="cvr"><use href="#chevr"/></svg><b class="ib"><svg class="i"><use href="#tri"/></svg></b><span>Cube</span><svg class="ey"><use href="#eye"/></svg><svg class="cm"><use href="#cam"/></svg></div>
        <div class="obar"></div>
      </section>

      <section class="area props">
        <div class="hdr">
          <span class="btn ed"><svg class="i"><use href="#props"/></svg><svg class="c"><use href="#chev"/></svg></span>
          <span class="search"><svg class="i"><use href="#search"/></svg>Search</span>
          <span class="btn ed cut"></span>
        </div>
        <div class="pmain">
          <div class="ptabs">
            <span class="p1"><svg class="i"><use href="#tools"/></svg></span><span class="p2"><svg class="i"><use href="#render"/></svg></span><span><svg class="i"><use href="#print"/></svg></span><span><svg class="i"><use href="#layers"/></svg></span><span><svg class="i"><use href="#scene"/></svg></span><span class="wd"><svg class="i"><use href="#world"/></svg></span><span class="bx"><svg class="i"><use href="#boxo"/></svg></span><span class="ob"><svg class="i"><use href="#obj"/></svg></span><span class="bl"><svg class="i"><use href="#wrench"/></svg></span><span class="bl"><svg class="i"><use href="#part"/></svg></span><span class="bl"><svg class="i"><use href="#phys"/></svg></span><span class="bl"><svg class="i"><use href="#constr"/></svg></span>
          </div>
          <div class="pbody">
            <div class="pcrumb"><svg class="i"><use href="#obj"/></svg><span>Cube</span><svg class="i dim2"><use href="#pin"/></svg></div>
            <div class="idsel pid"><span class="ed"><svg class="i"><use href="#obj"/></svg><svg class="c"><use href="#chev"/></svg></span><span class="field">Cube</span></div>
            <div class="panel">
              <div class="ph"><svg class="cv"><use href="#chev"/></svg><span>Transform</span><svg class="grip" viewBox="0 0 26 14"><path d="M0 2H26M0 11H26" stroke="#b0b0b0" stroke-width="3" stroke-dasharray="4 3.300"/><path d="M0 5H26M0 14H26" stroke="#1a1a1a" stroke-width="3" stroke-dasharray="4 3.300"/></svg></div>
              <div class="pr f"><label>Locati...</label><span>0 m</span><svg><use href="#lock"/></svg><i></i></div>
              <div class="pr"><label>Y</label><span>0 m</span><svg><use href="#lock"/></svg><i></i></div>
              <div class="pr l"><label>Z</label><span>0 m</span><svg><use href="#lock"/></svg><i></i></div>
              <div class="pr f"><label>Rotati...</label><span>0°</span><svg><use href="#lock"/></svg><i></i></div>
              <div class="pr"><label>Y</label><span>0°</span><svg><use href="#lock"/></svg><i></i></div>
              <div class="pr l"><label>Z</label><span>0°</span><svg><use href="#lock"/></svg><i></i></div>
              <div class="pr md"><label>Mode</label><span>XY...<svg class="c"><use href="#chev"/></svg></span><i></i></div>
              <div class="pr f"><label>Scale X</label><span>1.0</span><svg><use href="#lock"/></svg><i></i></div>
              <div class="pr"><label>Y</label><span>1.0</span><svg><use href="#lock"/></svg><i></i></div>
              <div class="pr l"><label>Z</label><span>1.0</span><svg><use href="#lock"/></svg><i></i></div>
              <div class="delta"><svg><use href="#chevr"/></svg>Delta Transform</div>
            </div>
            <div class="pscroll"></div>
          </div>
        </div>
      </section>
    </div>
  </main>

  <footer class="status">
    <div class="m1"><svg class="mo" viewBox="0 0 28 38"><use href="#mouse" width="28" height="38"/><path d="M1 18V8Q1 1 8 1H12V18Z" fill="currentColor"/></svg>Select</div>
    <div class="m2"><svg class="mo" viewBox="0 0 28 38"><use href="#mouse" width="28" height="38"/><rect x="9.500" y="5" width="9" height="16" rx="2" fill="currentColor"/></svg></div>
    <div class="m3"><svg class="mo" viewBox="0 0 28 38"><use href="#mouse" width="28" height="38"/><path d="M27 18V8Q27 1 20 1H16V18Z" fill="currentColor"/></svg>Mute Links</div>
    <div class="ver"><svg class="i"><use href="#globe"/></svg><i></i>4.2.0</div>
  </footer>
</div>
</body>
</html>
```
FILE: styles.css
```css
*{box-sizing:border-box}
body{margin:0;background:#181818;font-family:Inter,"Liberation Sans",sans-serif;font-size:24.6px;letter-spacing:.55px;line-height:1;color:#e4e4e4;width:2687px;height:1397px;overflow:hidden}
svg{display:block;flex:none}
p{margin:0}
i,em{font-style:normal}
b{font-weight:400}
.defs{position:absolute;width:0;height:0}
.app{width:2687px;height:1397px;border-top:1px solid #5a5a5a;border-left:1px solid #d0d0d0;border-right:1px solid #333;padding-left:1px;background:#161616;display:flex;flex-direction:column;text-shadow:0 1px 2px rgba(0,0,0,.45)}
.i{width:35px;height:33px}
.c{width:15px;height:10px}
.cv{width:21px;height:12px}
.xx{width:20px;height:19px}
.dim{color:#7d7d7d}
.dim2{color:#a3a3a3}

.titlebar{height:53px;margin-left:-1px;background:#202020;display:flex;align-items:center;padding:0 44px 0 4px}
.applogo{width:33px;height:29px;color:#ea7600;--hole:#fff;--eye:#20558c;margin-top:-1px}
.wtitle{font-family:"Open Sans",sans-serif;font-size:25.7px;margin-left:10px;letter-spacing:.3px;color:#fff;text-shadow:none}
.winctl{margin-left:auto;display:flex;gap:86px;margin-top:-2px}
.winctl svg{width:22px;height:22px}

.topbar{height:62px;margin-left:-1px;background:#181818;display:flex;align-items:flex-start;padding-top:7px}
.menulogo{width:37px;height:34px;margin:6px 0 0 21px;color:#dadada;--hole:#181818;--eye:#dadada}
.menus{display:flex;gap:35.500px;height:44px;align-items:center}
.topbar .menus{margin-left:22px;width:525px;flex:none;gap:35.500px}
.tabs{display:flex;flex:none;margin-top:4px;height:49px;width:1308px;color:#989898}
.tabs span{background:#1e1e1e;border-radius:8px 8px 0 0;height:49px;line-height:50px;text-align:center;flex:none;padding:0 3px 0 0}
.t1{width:127px}.t2{width:160px}.t3{width:159px}.t4{width:172px}.t5{width:207px}.t6{width:146px}.t7{width:165px}.t8{width:153px}

.btn,.seg,.idsel,.num{height:44px;flex:none;border-radius:8px;display:flex;align-items:center;box-shadow:0 0 0 1px #3c3c3c,0 2px 1px rgba(0,0,0,.2)}
.btn{background:#282828}
.ed{width:71px;display:flex;align-items:center;padding-left:9px;gap:4px;flex:none;height:100%}
.btn.ed{height:44px}
.dd{padding:0 7px 0 17px;justify-content:space-between}
.seg,.idsel{overflow:hidden}
.cell{width:45px;height:100%;display:flex;align-items:center;justify-content:center;flex:none}
.blue{background:#4772b3;color:#fff}
.g{background:#424242;color:#b8b8b8}
.g2{background:#545454}
.dk{background:#282828}
.dk2{background:#2b2b2b;color:#606060}
.g12{margin-left:12px}.g14{margin-left:14px}
.push{margin-left:auto}
.idsel .ed{background:#262626;border-right:1px solid #3c3c3c}
.field{background:#1d1d1d;height:100%;flex:1;display:flex;align-items:center;padding-left:16px;white-space:nowrap}
.on{background:#545454;border-right:1px solid #3f3f3f;width:46px}
.off{background:#2d2d2d;color:#5c5c5c;width:46px}
.scene{width:394px;margin-left:-1px}
.vlayer{width:348px;margin-left:13px}
.pinr{margin-left:auto;margin-right:9px}

.work{display:flex;height:1232px;gap:4px;margin-top:0}
.left{width:2216px;display:flex;flex-direction:column;gap:4px}
.right{width:463px;display:flex;flex-direction:column;gap:4px}
.upper{display:flex;gap:4px;height:566px}
.area{position:relative;overflow:hidden;border-radius:9px}
.hdr{display:flex;align-items:flex-start;padding:8px 18px 0;height:59px}
.fold{position:absolute;width:19px;height:32px;background:#252525;border-radius:6px 0 0 6px;display:flex;align-items:center;justify-content:flex-end;color:#a0a0a0;padding-right:4px}
.fold svg{width:11px;height:18px}

.sheet{width:916px;height:566px;background:#303030}
.evald{width:237px;margin-left:13px}
.objic{margin:5px 0 0 18px}
.objname{margin-left:20px;line-height:45px}
.objpin{margin:5px 0 0 36px}
.sheetbody{display:flex;height:448px;padding-left:18px}
.tree{width:340px;height:430px;margin-top:18px;background:#252525;border:1px solid #3c3c3c;border-bottom:0;border-radius:6px 6px 0 0;overflow:hidden;padding:10px 11px 0 9px;color:#cfcfcf}
.tr{display:flex;align-items:center;height:50.300px}
.tr.top .cv{margin:0 13px 0 4px}
.tr.top span{margin-left:22px}
.tr.top.more{padding-left:38px}
.kids{display:flex;flex-direction:column;background:linear-gradient(#454545,#454545) 16px 0/1px 100% no-repeat}
.kids .tr{padding-left:70px;height:43.300px;margin:3.500px 0;padding-right:11px}
.kids span{margin-left:21px;white-space:nowrap;letter-spacing:.3px}
.kids b{margin-left:auto;color:#8a8a8a;margin-right:-1px}
.sel{background:#4772b3;border-radius:7px}
.kids .sel b{color:#b9c6dd}
.treescroll{width:8px;height:273px;margin:23px 5px 0 5px;background:#3b3b3b;border-radius:4px}
.cells{flex:1;display:flex;flex-direction:column;background:#303030}
.chead{height:50px;background:linear-gradient(#1c1c1c,#1c1c1c) 51px 0/1px 100% no-repeat,#333;border-bottom:2px solid #1c1c1c}
.rows{flex:1;background:linear-gradient(#1c1c1c,#1c1c1c) 51px 0/1px 100% no-repeat,linear-gradient(rgba(255,255,255,.05),rgba(255,255,255,.05)) 0 0/51px 100% no-repeat,repeating-linear-gradient(#282828 0 46.500px,#2b2b2b 46.500px 93px)}
.foot{height:59px;display:flex;justify-content:flex-end;align-items:center;padding:0 17px 0;gap:25px}
.foot i{width:2px;height:31px;background:#ccc}
.fs{left:897px;top:94px}

.view{width:1296px;height:566px;background:#3d3d3d}
.scenebg,.gizmo,.sides,.faceplane{position:absolute;left:0;top:0;width:1296px;height:566px}
.model{position:absolute;left:0;top:0;width:1296px;height:566px;filter:drop-shadow(1.400px 0 0 #fb9834) drop-shadow(-1.400px 0 0 #fb9834) drop-shadow(0 1.400px 0 #fb9834) drop-shadow(0 -1.400px 0 #fb9834)}
.faceplane{overflow:visible;transform-origin:658px 319px;transform:matrix3d(1.08,0,0,0,0,1,0,-.00069,0,0,1,0,0,0,0,1)}
.faceplane text{font-family:Lato,sans-serif;font-size:152px;letter-spacing:0;fill:#a0a2a4;stroke:#a0a2a4;stroke-width:1.200px;text-shadow:none}
.ax text{font-size:23px;letter-spacing:0;font-weight:600;text-anchor:middle;fill:rgba(0,0,0,.65);text-shadow:none}
.vh{position:relative;height:62px;background:rgba(48,48,48,.72);border-bottom:1px solid #383838}
.mode{width:254px;margin-left:14px;padding-left:9px}
.vh .menus{margin-left:30px;width:388px;flex:none}
.global{width:176px;margin-left:36px;padding-left:9px}
.selmodes{position:absolute;left:0;top:62px;width:260px;height:57px;background:#343434;border-radius:0 0 8px 0;padding:6px 0 0 19px;display:flex}
.selmodes .cell{width:44.500px;height:44px;background:#545454;border-right:1px solid #3a3a3a;color:#c2c2c2}
.selmodes .blue{background:#4772b3;color:#fff;border-radius:7px 0 0 7px}
.selmodes .cell:last-child{border-radius:0 7px 7px 0}
.optwrap{position:absolute;right:0;top:62px;width:189px;height:57px;background:#343434;border-radius:0 0 0 8px;padding:6px 0 0 19px}
.optwrap .btn{width:151px}
.tools{position:absolute;left:19px;top:139px;display:flex;flex-direction:column;gap:1px}
.tool{width:92px;height:78px;background:#282828}
.tool svg{width:92px;height:78px}
.act{background:#4772b3;border-radius:8px 8px 0 0}
.tb{border-radius:0 0 8px 8px}
.tt{border-radius:8px 8px 0 0}
.gap{margin-top:13px}
.persp{position:absolute;left:152px;top:137px;line-height:42px;text-shadow:0 0 3px #000,0 1px 2px #000;color:#f2f2f2}
.fv{right:0;top:156px;background:#333}

.nodes{height:565px;background:#1d1d1d}
.nodes>.hdr{background:#222;height:58px}
.modif{width:180px;margin-left:13px}
.nodes .menus{margin-left:29px;width:364px;flex:none}
.gnsel{width:449px;margin-left:156px}
.gnpin{margin:5px 0 0 18px}
.upb{background:#333;color:#6e6e6e}
.nodes .ov{margin-left:13px}
.ov .cell+.cell{width:46px}
.canvas{position:relative;height:507px;background:radial-gradient(circle at 1.500px 1.500px,#2b2b2b 1.500px,transparent 2px) 1px 15px/146.700px 146.700px}
.crumbs{position:absolute;left:3px;top:32px;height:40px;display:flex;align-items:center}
.cr0{width:9px;height:13px;margin-right:30px;color:#aaa}
.crumbs .i{margin-right:20px;width:36px}
.cr{width:11px;height:17px;margin:0 23px 0 38px}
.links{position:absolute;left:0;top:0;width:2216px;height:507px}
.node{position:absolute;background:#303030;border-radius:6px;box-shadow:0 3px 12px rgba(0,0,0,.6);font-size:16.800px;letter-spacing:.05px;display:flex;flex-direction:column;padding:0 16px}
.nstring{left:492px;top:300px;width:206px;height:113px}
.nstc{left:802px;top:63px;width:278px;height:460px}
.nfill{left:1217px;top:142px;width:205px;height:172px}
.next{left:1481px;top:86px;width:206px;height:329px}
.ngo{left:1746px;top:165px;width:205px;height:101px}
.nh{height:28px;margin:0 -16px 5px;padding:0 0 1px 16px;border-radius:6px 6px 0 0;display:flex;align-items:center;flex:none;font-size:16.300px;letter-spacing:0}
.nh svg{width:14px;height:9px;margin-right:5px}
.red{background:#83314a}.grn{background:#1d725e}.blk{background:#1b1b1b}
.nstc .nh{height:29px}.nfill .nh,.next .nh{margin-bottom:4px}.ngo .nh{height:30px;margin-bottom:4px}
.nr{height:32px;flex:none;display:flex;align-items:center;position:relative}
.out{justify-content:flex-end}
.nr i,.nv i{position:absolute;left:-22.500px;top:50%;width:13px;height:13px;margin-top:-6.500px}
.out i{left:auto;right:-22.500px}
.so{border-radius:50%}
.di{transform:rotate(45deg) scale(.78)}
.str{background:#70b2ff}.geo{background:#00d6a3}.int{background:#598c5c}.vec{background:#6363c7}.boo{background:#cca6d6}.flt{background:#a1a1a1}
.vir{border:2px solid #777;background:#2a2a2a}
.dot{background-image:radial-gradient(circle,#222 2.200px,transparent 2.800px)}
.nf{height:27px;margin:10px -1px 0;background:#1d1d1d;border:1px solid #3c3c3c;border-radius:5px;display:flex;align-items:center;padding-left:10px}
.nd{height:27px;margin:8px -1px 0;background:#282828;border:1px solid #3c3c3c;border-radius:5px;display:flex;align-items:center;padding:0 3px 0 9px;flex:none}
.nd.ic{padding-left:6px}
.ni{width:20px;height:20px;margin-right:12px}
.nc{width:10px;height:6px}
.nd .nc{margin-left:auto;margin-right:1px}
.nfont{height:29px;margin:9px -1px 1px;display:flex;border:1px solid #3c3c3c;border-radius:5px;overflow:hidden;flex:none}
.f0{width:43px;background:#282828;display:flex;align-items:center;gap:3px;padding-left:7px}
.ff{width:19px;height:20px}
.f1{flex:1;background:#262626;color:#858585;display:flex;align-items:center;padding-left:9px}
.f2{width:29px;background:#545454;border-left:1px solid #3c3c3c;display:flex;align-items:center;justify-content:center}
.f2 svg{width:20px;height:20px}.f2 .fo{width:21px;height:18px}.f2 .fx{width:13px;height:14px}
.npiv{display:flex;align-items:center;height:27px;margin:8px 0 2px;flex:none}
.npiv span{margin-left:9px;width:97px}
.npiv .nd{margin:0 -1px 0 0;flex:1}
.nv{height:27px;margin:4px -1px 0;background:#545454;border-radius:4px;display:flex;align-items:center;justify-content:space-between;padding:0 20px 0 21px;position:relative;flex:none}
.nr+.nv{margin-top:3px}
.nv i{left:-21.500px}
.ntog{display:flex;height:26px;margin:10px -1px 3px;background:#545454;border-radius:5px;overflow:hidden;flex:none}
.ntog span{width:86px;display:flex;align-items:center;justify-content:center}
.next .nd{margin-top:12px}
.next .in{height:31px}.next .nd+.nr{margin-top:3px}.next .nv{height:25px;margin-bottom:3px}
.ngo .in{height:31px}
.cb{width:18px;height:18px;margin-right:5px}
.hbar{position:absolute;left:18px;top:496px;width:2176px;height:7px;border-radius:4px;background:rgba(70,70,70,.5)}
.vbar{position:absolute;right:5px;top:23px;width:7px;height:396px;border-radius:4px;background:#2f2f2f}
.fn{right:0;top:36px;background:rgba(26,26,26,.8)}

.time{height:93px;background:#303030}
.time .hdr{height:60px}
.pk{width:307px;margin-left:13px;padding:0}
.pb,.ky{display:flex;align-items:center;justify-content:space-between;height:44px;padding:0 8px 0 17px}
.pb{width:166px;border-right:1px solid #3c3c3c}.ky{flex:1}
.time .menus{margin-left:22px;width:464px;flex:none}
.rec .cell+.cell{width:44px}
.play{margin-left:15px;background:#545454}
.play span{width:45.700px;height:100%;border-right:1px solid #3c3c3c}
.play span:last-child{border:0}
.play svg{width:46px;height:44px;fill:#e6e6e6}
.num{width:170px;margin-left:296px;background:#545454;justify-content:center}
.range{width:445px;margin-left:14px;background:#545454}
.range span{height:100%;display:flex;align-items:center;justify-content:space-between}
.wt{width:43px;padding-left:5px}
.st{width:206px;padding:0 34px 0 36px;border:1px solid #3f3f3f;border-width:0 1px}
.en{flex:1;padding:0 33px 0 37px}
.ruler{position:relative;height:33px;background:#1d1d1d;display:flex;padding-left:155px}
.ruler span{width:164.700px;text-align:center;line-height:47px;color:#a8a8a8;flex:none;font-size:23.500px}
.rbar{position:absolute;left:19px;top:9px;width:2176px;height:19px;border-radius:10px;background:radial-gradient(circle,#282828 6.500px,transparent 7.500px) 0 50%/18px 19px no-repeat,radial-gradient(circle,#282828 6.500px,transparent 7.500px) 100% 50%/18px 19px no-repeat,#545454}
.cf{position:absolute;left:54px;top:7px;width:54px;height:26px;background:#4772b3;color:#fff;border-radius:4px 4px 0 0;text-align:center;line-height:34px;font-size:23px}

.outl{height:349px;background:repeating-linear-gradient(#282828 0 46px,#2b2b2b 46px 92px) 0 61px}
.outl .hdr{padding-left:19px;height:62px;background:#282828}
.search{display:flex;align-items:center;height:44px;border-radius:8px;background:#1d1d1d;box-shadow:0 0 0 1px #3c3c3c;color:#6b6b6b;padding-left:10px;flex:none;width:300px;margin-left:36px}
.search .i{color:#ddd;margin-right:14px}
.or{height:46px;display:flex;align-items:center;color:#c2c2c2;position:relative}
.o1{padding-left:53px}.o1 .i{color:#d5d5d5}.o1 span{margin-left:12px;width:203px;overflow:hidden;white-space:nowrap;line-height:34px;padding-top:1px}
.o2{padding-left:58px}
.ib{width:45px;height:41px;border-radius:8px;background:#515151;display:flex;align-items:center;justify-content:center}
.o2 .ib{margin:0 8px 0 15px}
.ib .i{color:#e0e0e0}
.o2 span{width:169px;padding-top:1px}
.o2 .cb{width:24px;height:25px;margin:0 16px 0 0;position:relative;top:-1px}
.ey{width:33px;height:22px;margin-right:13px;color:#e0e0e0}
.cm{width:32px;height:26px;color:#e0e0e0}
.o3{background:#334d80;padding-left:110px}
.o3 .ib{background:#5b6e94;margin:0 8px 0 15px}
.o3 .ib .i{color:#c98a57}
.o3 span{color:#ffa83a;width:164px;padding-top:1px}
.cvr{width:14px;height:21px}
.obar{position:absolute;left:18px;bottom:4px;width:352px;height:7px;border-radius:4px;background:#3b3b3b}

.props{height:879px;background:#303030}
.props .hdr{padding:6px 0 0 18px}
.props .hdr .search{width:271px;margin-left:50px}
.cut{margin-left:37px}
.pmain{display:flex;height:820px}
.ptabs{width:68px;background:#1d1d1d;color:#b8b8b8;display:flex;flex-direction:column;overflow:hidden}
.ptabs span{height:64.400px;width:68px;flex:none;display:flex;align-items:center;justify-content:center;padding-left:3px}
.ptabs .p1{height:99px;border-bottom:1px solid #181818}.ptabs .p2{height:61px}
.wd{color:#b5505a}.ptabs .bx{height:100px;color:#e0e0e0;margin:1px 0}
.ptabs .ob{height:61px;width:63px;margin:0 0 2px 5px;padding:0 6px 0 4px;background:#303030;color:#e39657;border-radius:8px 0 0 8px}
.bl{color:#5f87d3}
.pbody{flex:1;position:relative;padding-left:16px}
.pcrumb{display:flex;align-items:center;height:36px;margin-top:23px;padding:0 24px 0 7px}
.pcrumb span{margin-left:20px}.pcrumb .dim2{margin-left:auto}
.pid{width:358px;margin:43px 0 0 2px}
.panel{width:359px;height:646px;margin-top:23px;background:#3d3d3d;border-radius:9px}
.ph{display:flex;align-items:center;height:60px;padding:0 17px 0 19px;margin-bottom:15px}
.ph span{margin-left:11px}.grip{width:26px;height:14px;margin:-5px 0 0 auto}
.pr{display:flex;align-items:center;height:46px}
.pr label{width:120px;text-align:right;flex:none}
.pr span{width:107px;height:45px;margin:0 6px 1px 21px;background:#545454;display:flex;align-items:center;justify-content:center;flex:none}
.pr svg{width:35px;height:28px;color:#a3a3a3}
.pr i{width:9px;height:9px;border-radius:50%;background:#dcdcdc;margin-left:25px}
.f span{border-radius:7px 0 0 0}.l span{border-radius:0 0 0 7px}
.l{margin-bottom:11.500px}
.md{margin-bottom:11px}
.md span{background:#282828;border-radius:7px;justify-content:space-between;padding:0 6px 0 17px}
.md i{margin-left:60px}
.md svg.c{width:15px;height:10px;color:#e4e4e4}
.delta{display:flex;align-items:center;padding-left:58px;margin-top:33px;height:34px}
.delta svg{width:13px;height:22px;margin-right:11px}
.pscroll{position:absolute;right:3px;top:22px;width:9px;height:486px;border-radius:5px;background:#434343}

.status{height:48px;display:flex;align-items:center;background:#181818;color:#8b8b8b;margin-left:-1px;padding:2px 31px 0 27px}
.mo{width:28px;height:38px;margin-right:10px}
.m1,.m2,.m3,.ver{display:flex;align-items:center}
.m1{width:492px}.m2{width:491px}
.ver{margin-left:auto}
.ver i{width:3px;height:31px;background:#8b8b8b;margin:0 11px 0 17px}
```
